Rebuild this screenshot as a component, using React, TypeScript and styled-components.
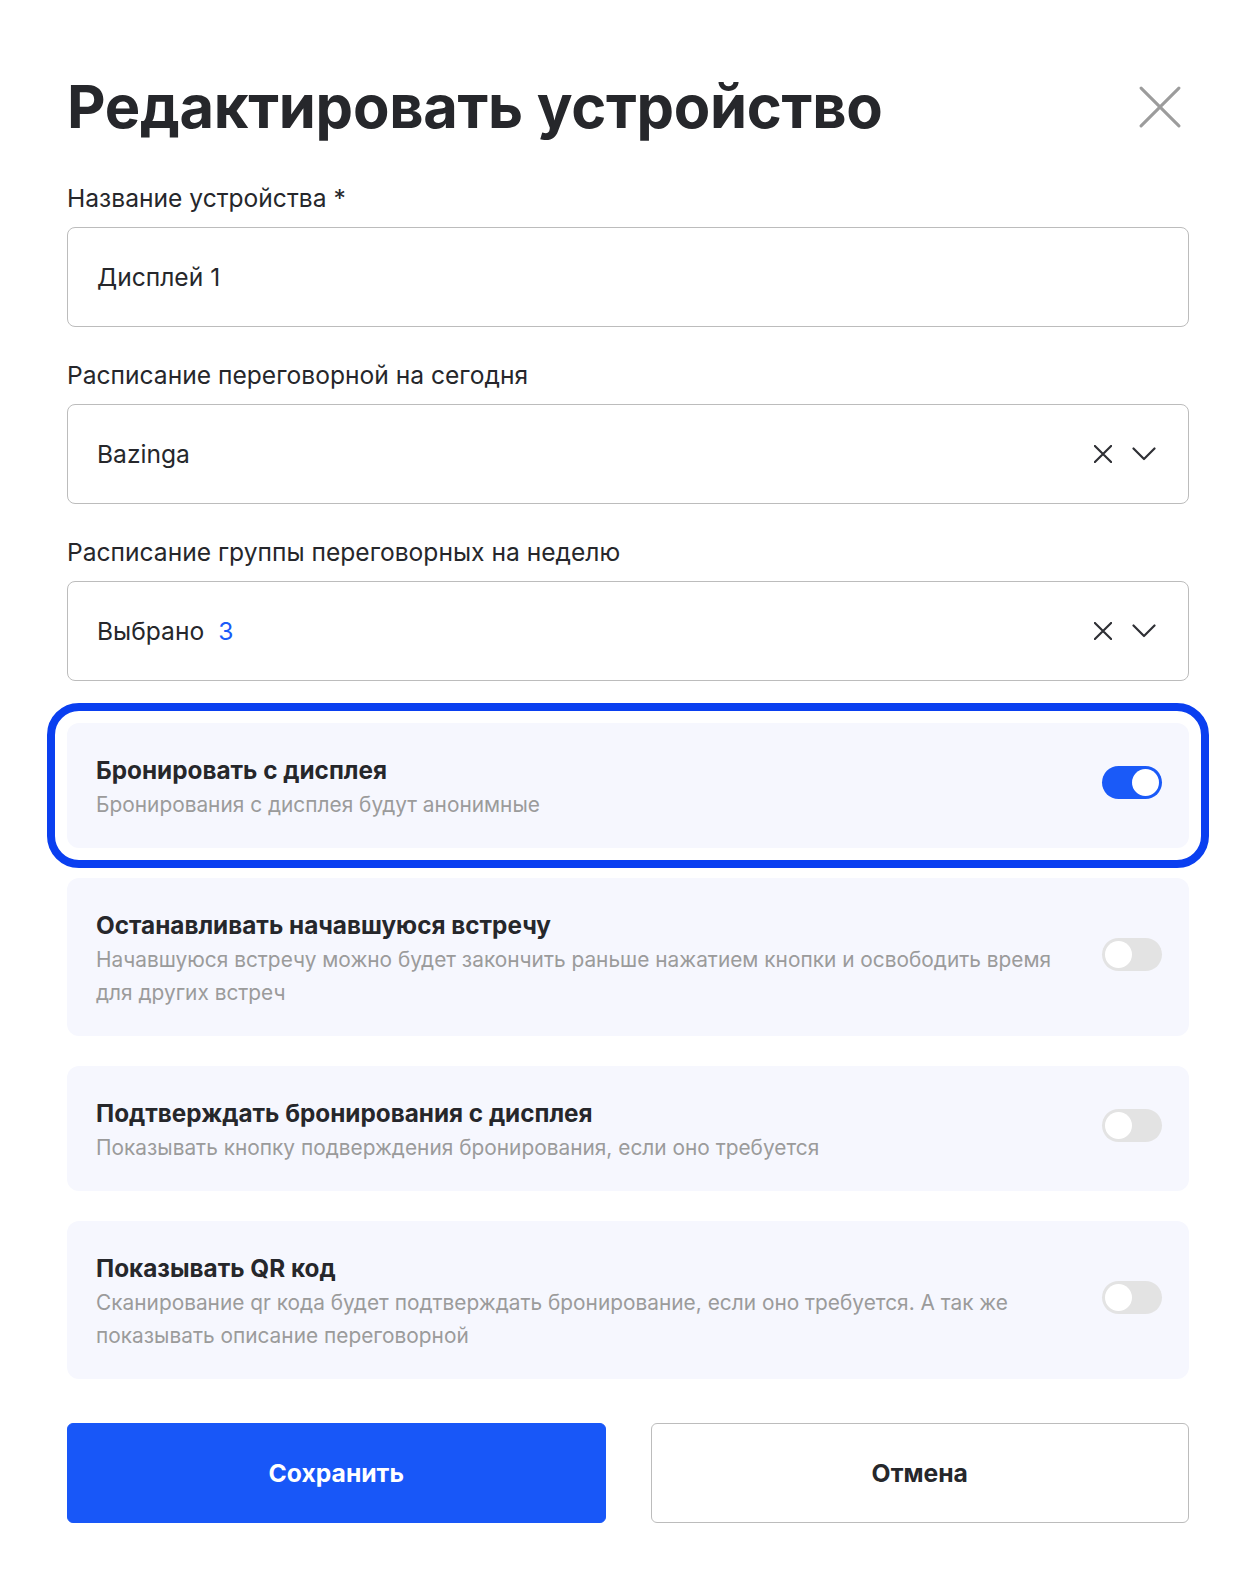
import styled, { createGlobalStyle } from "styled-components";
import { useState } from "react";

const GlobalStyles = createGlobalStyle`
  * { box-sizing: border-box; }
  html, body { overflow: hidden; }
  body {
    margin: 0;
    background: #ffffff;
    font-family: Inter, "Noto Sans", sans-serif;
    color: #26272b;
  }
`;

const Page = styled.div`
  width: 1189px;
  padding: 60px 0 40px 67px;
`;

const Header = styled.div`
  display: flex;
  align-items: center;
  justify-content: space-between;
  height: 92px;
  margin-bottom: 31px;
`;

const Title = styled.h1`
  margin: 0;
  font-size: 59.6px;
  font-weight: 700;
  letter-spacing: -0.3px;
  color: #26272b;
`;

const CloseButton = styled.button`
  border: 0;
  background: none;
  padding: 0;
  margin-right: 7px;
  margin-top: 2px;
  width: 44px;
  height: 44px;
  cursor: pointer;
  display: flex;
  align-items: center;
  justify-content: center;
`;

const Field = styled.div<{ $last?: boolean }>`
  display: flex;
  flex-direction: column;
  gap: 14px;
  margin-bottom: ${(p) => (p.$last ? "0" : "33px")};
`;

const Label = styled.label`
  font-size: 24.6px;
  line-height: 30px;
  color: #26272b;
`;

const Box = styled.div`
  display: flex;
  align-items: center;
  height: 100px;
  padding: 0 32px 0 29px;
  border: 1px solid #bcbcbc;
  border-radius: 8px;
  font-size: 24.6px;
  color: #26272b;
`;

const BoxValue = styled.span`
  flex: 1;
  display: flex;
  gap: 14px;
`;

const Count = styled.span`
  color: #1a5af8;
`;

const Icons = styled.div`
  display: flex;
  align-items: center;
  gap: 20px;
`;

const Options = styled.div`
  display: flex;
  flex-direction: column;
  gap: 30px;
  margin-top: 42px;
`;

const Card = styled.div<{ $focused?: boolean }>`
  display: flex;
  align-items: center;
  gap: 30px;
  padding: 31px 27px 27px 29px;
  background: #f6f7fe;
  border-radius: 12px;
  outline: ${(p) => (p.$focused ? "8px solid #0a3ff0" : "none")};
  outline-offset: 12px;
`;

const CardText = styled.div`
  flex: 1;
  display: flex;
  flex-direction: column;
  gap: 2px;
`;

const CardTitle = styled.div`
  font-size: 24.3px;
  line-height: 32px;
  font-weight: 700;
  color: #26272b;
`;

const CardDesc = styled.div`
  font-size: 20.85px;
  line-height: 33px;
  color: #9b9b9b;
`;

const Track = styled.button<{ $on: boolean }>`
  position: relative;
  flex: none;
  width: 60px;
  height: 33px;
  margin-bottom: 10px;
  border: 0;
  padding: 0;
  border-radius: 17px;
  background: ${(p) => (p.$on ? "#1a5af8" : "#e3e3e3")};
  cursor: pointer;
`;

const Knob = styled.span<{ $on: boolean }>`
  position: absolute;
  top: 3px;
  left: ${(p) => (p.$on ? "30px" : "3px")};
  width: 27px;
  height: 27px;
  border-radius: 50%;
  background: #ffffff;
`;

const Actions = styled.div`
  display: grid;
  grid-template-columns: 1fr 1fr;
  gap: 45px;
  margin-top: 44px;
`;

const Button = styled.button<{ $primary?: boolean }>`
  height: 100px;
  border-radius: 6px;
  border: 1px solid ${(p) => (p.$primary ? "#1857f8" : "#bcbcbc")};
  background: ${(p) => (p.$primary ? "#1857f8" : "#ffffff")};
  color: ${(p) => (p.$primary ? "#ffffff" : "#26272b")};
  font-family: inherit;
  font-size: 24.7px;
  font-weight: 700;
  cursor: pointer;
`;

const CrossIcon = ({ size, color, width }: { size: number; color: string; width: number }) => (
  <svg width={size} height={size} viewBox="0 0 20 20" fill="none">
    <path d="M1 1L19 19M19 1L1 19" stroke={color} strokeWidth={width} strokeLinecap="round" />
  </svg>
);

const ChevronIcon = () => (
  <svg width="24" height="14" viewBox="0 0 24 14" fill="none">
    <path d="M1.5 1.5L12 12L22.5 1.5" stroke="#2f3035" strokeWidth="2.2" strokeLinecap="round" strokeLinejoin="round" />
  </svg>
);

const SelectIcons = () => (
  <Icons>
    <CrossIcon size={18} color="#2f3035" width={2.4} />
    <ChevronIcon />
  </Icons>
);

const Toggle = ({ on, onClick }: { on: boolean; onClick: () => void }) => (
  <Track $on={on} onClick={onClick}>
    <Knob $on={on} />
  </Track>
);

const options = [
  {
    title: "Бронировать с дисплея",
    desc: "Бронирования с дисплея будут анонимные",
  },
  {
    title: "Останавливать начавшуюся встречу",
    desc: "Начавшуюся встречу можно будет закончить раньше нажатием кнопки и освободить время для других встреч",
  },
  {
    title: "Подтверждать бронирования с дисплея",
    desc: "Показывать кнопку подверждения бронирования, если оно требуется",
  },
  {
    title: "Показывать QR код",
    desc: "Сканирование qr кода будет подтверждать бронирование, если оно требуется. А так же показывать описание переговорной",
  },
];

const App = () => {
  const [flags, setFlags] = useState([true, false, false, false]);

  const toggle = (i: number) => setFlags(flags.map((f, j) => (j === i ? !f : f)));

  return (
    <>
      <GlobalStyles />
      <Page>
        <Header>
          <Title>Редактировать устройство</Title>
          <CloseButton>
            <CrossIcon size={42} color="#9c9c9c" width={1.45} />
          </CloseButton>
        </Header>

        <Field>
          <Label>Название устройства *</Label>
          <Box>
            <BoxValue>Дисплей 1</BoxValue>
          </Box>
        </Field>

        <Field>
          <Label>Расписание переговорной на сегодня</Label>
          <Box>
            <BoxValue>Bazinga</BoxValue>
            <SelectIcons />
          </Box>
        </Field>

        <Field $last>
          <Label>Расписание группы переговорных на неделю</Label>
          <Box>
            <BoxValue>
              Выбрано <Count>3</Count>
            </BoxValue>
            <SelectIcons />
          </Box>
        </Field>

        <Options>
          {options.map((o, i) => (
            <Card key={o.title} $focused={i === 0}>
              <CardText>
                <CardTitle>{o.title}</CardTitle>
                <CardDesc>{o.desc}</CardDesc>
              </CardText>
              <Toggle on={flags[i]} onClick={() => toggle(i)} />
            </Card>
          ))}
        </Options>

        <Actions>
          <Button $primary>Сохранить</Button>
          <Button>Отмена</Button>
        </Actions>
      </Page>
    </>
  );
};

export default App;
